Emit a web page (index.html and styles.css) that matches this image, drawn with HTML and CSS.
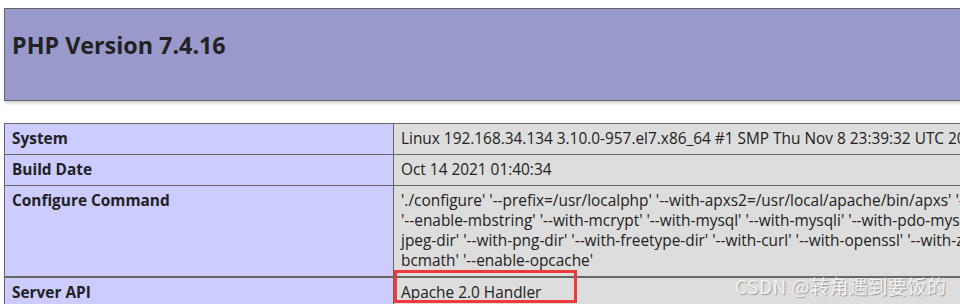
FILE: index.html
```html
<!DOCTYPE html>
<html>
<head>
<meta charset="utf-8">
<link rel="stylesheet" href="styles.css">
</head>
<body>
<div class="page">
  <table class="hdr">
    <tr class="h"><td><h1>PHP Version 7.4.16</h1></td></tr>
  </table>
  <table class="info">
    <tr><td class="e">System</td><td class="v">Linux 192.168.34.134 3.10.0-957.el7.x86_64 #1 SMP Thu Nov 8 23:39:32 UTC 2018 x86_64</td></tr>
    <tr><td class="e">Build Date</td><td class="v">Oct 14 2021 01:40:34</td></tr>
    <tr><td class="e">Configure Command</td><td class="v">'./configure' '--prefix=/usr/localphp' '--with-apxs2=/usr/local/apache/bin/apxs' '--with-mysql=mysqlnd'<br>'--enable-mbstring' '--with-mcrypt' '--with-mysql' '--with-mysqli' '--with-pdo-mysql' '--with-gd' '--with-<br>jpeg-dir' '--with-png-dir' '--with-freetype-dir' '--with-curl' '--with-openssl' '--with-zlib' '--enable-<br>bcmath' '--enable-opcache'</td></tr>
    <tr class="last"><td class="e">Server API</td><td class="v"><span class="mark">Apache 2.0 Handler</span></td></tr>
  </table>
  <div class="wm">CSDN @转角遇到要饭的</div>
</div>
</body>
</html>
```
FILE: styles.css
```css
html, body { margin: 0; padding: 0; overflow: hidden; background: #fff; }
body { font-family: "Open Sans", "Noto Sans", sans-serif; color: #222; }
.page { position: relative; padding: 8px 0 0 4px; width: 1200px; }
table { border-collapse: collapse; width: 1167px; box-shadow: 1px 2px 3px #ccc; }
td { border: 1px solid #666; font-size: 15.4px; line-height: 20px; padding: 5px 6px 5px 7px; vertical-align: baseline; white-space: nowrap; }
.hdr { margin-bottom: 22px; }
.hdr td { background: #9999cc; height: 91px; vertical-align: top; padding: 0 7px; }
h1 { margin: 21px 0 0; font-size: 23.3px; line-height: 30px; font-weight: bold; color: #222; }
.e { background: #ccccff; width: 375px; font-weight: bold; }
.v { background: #dddddd; }
.last td { border-top-width: 2px; }
.mark { position: relative; }
.mark::after { content: ""; position: absolute; left: -7px; top: -12px; width: 177px; height: 27px; border: 3px solid #f03a3a; }
.wm { position: absolute; left: 735px; top: 272px; font-family: "Noto Sans CJK SC", sans-serif; font-size: 19px; color: #f2f2f2; text-shadow: 1px 1px 1px #999; letter-spacing: 0.5px; }
```
